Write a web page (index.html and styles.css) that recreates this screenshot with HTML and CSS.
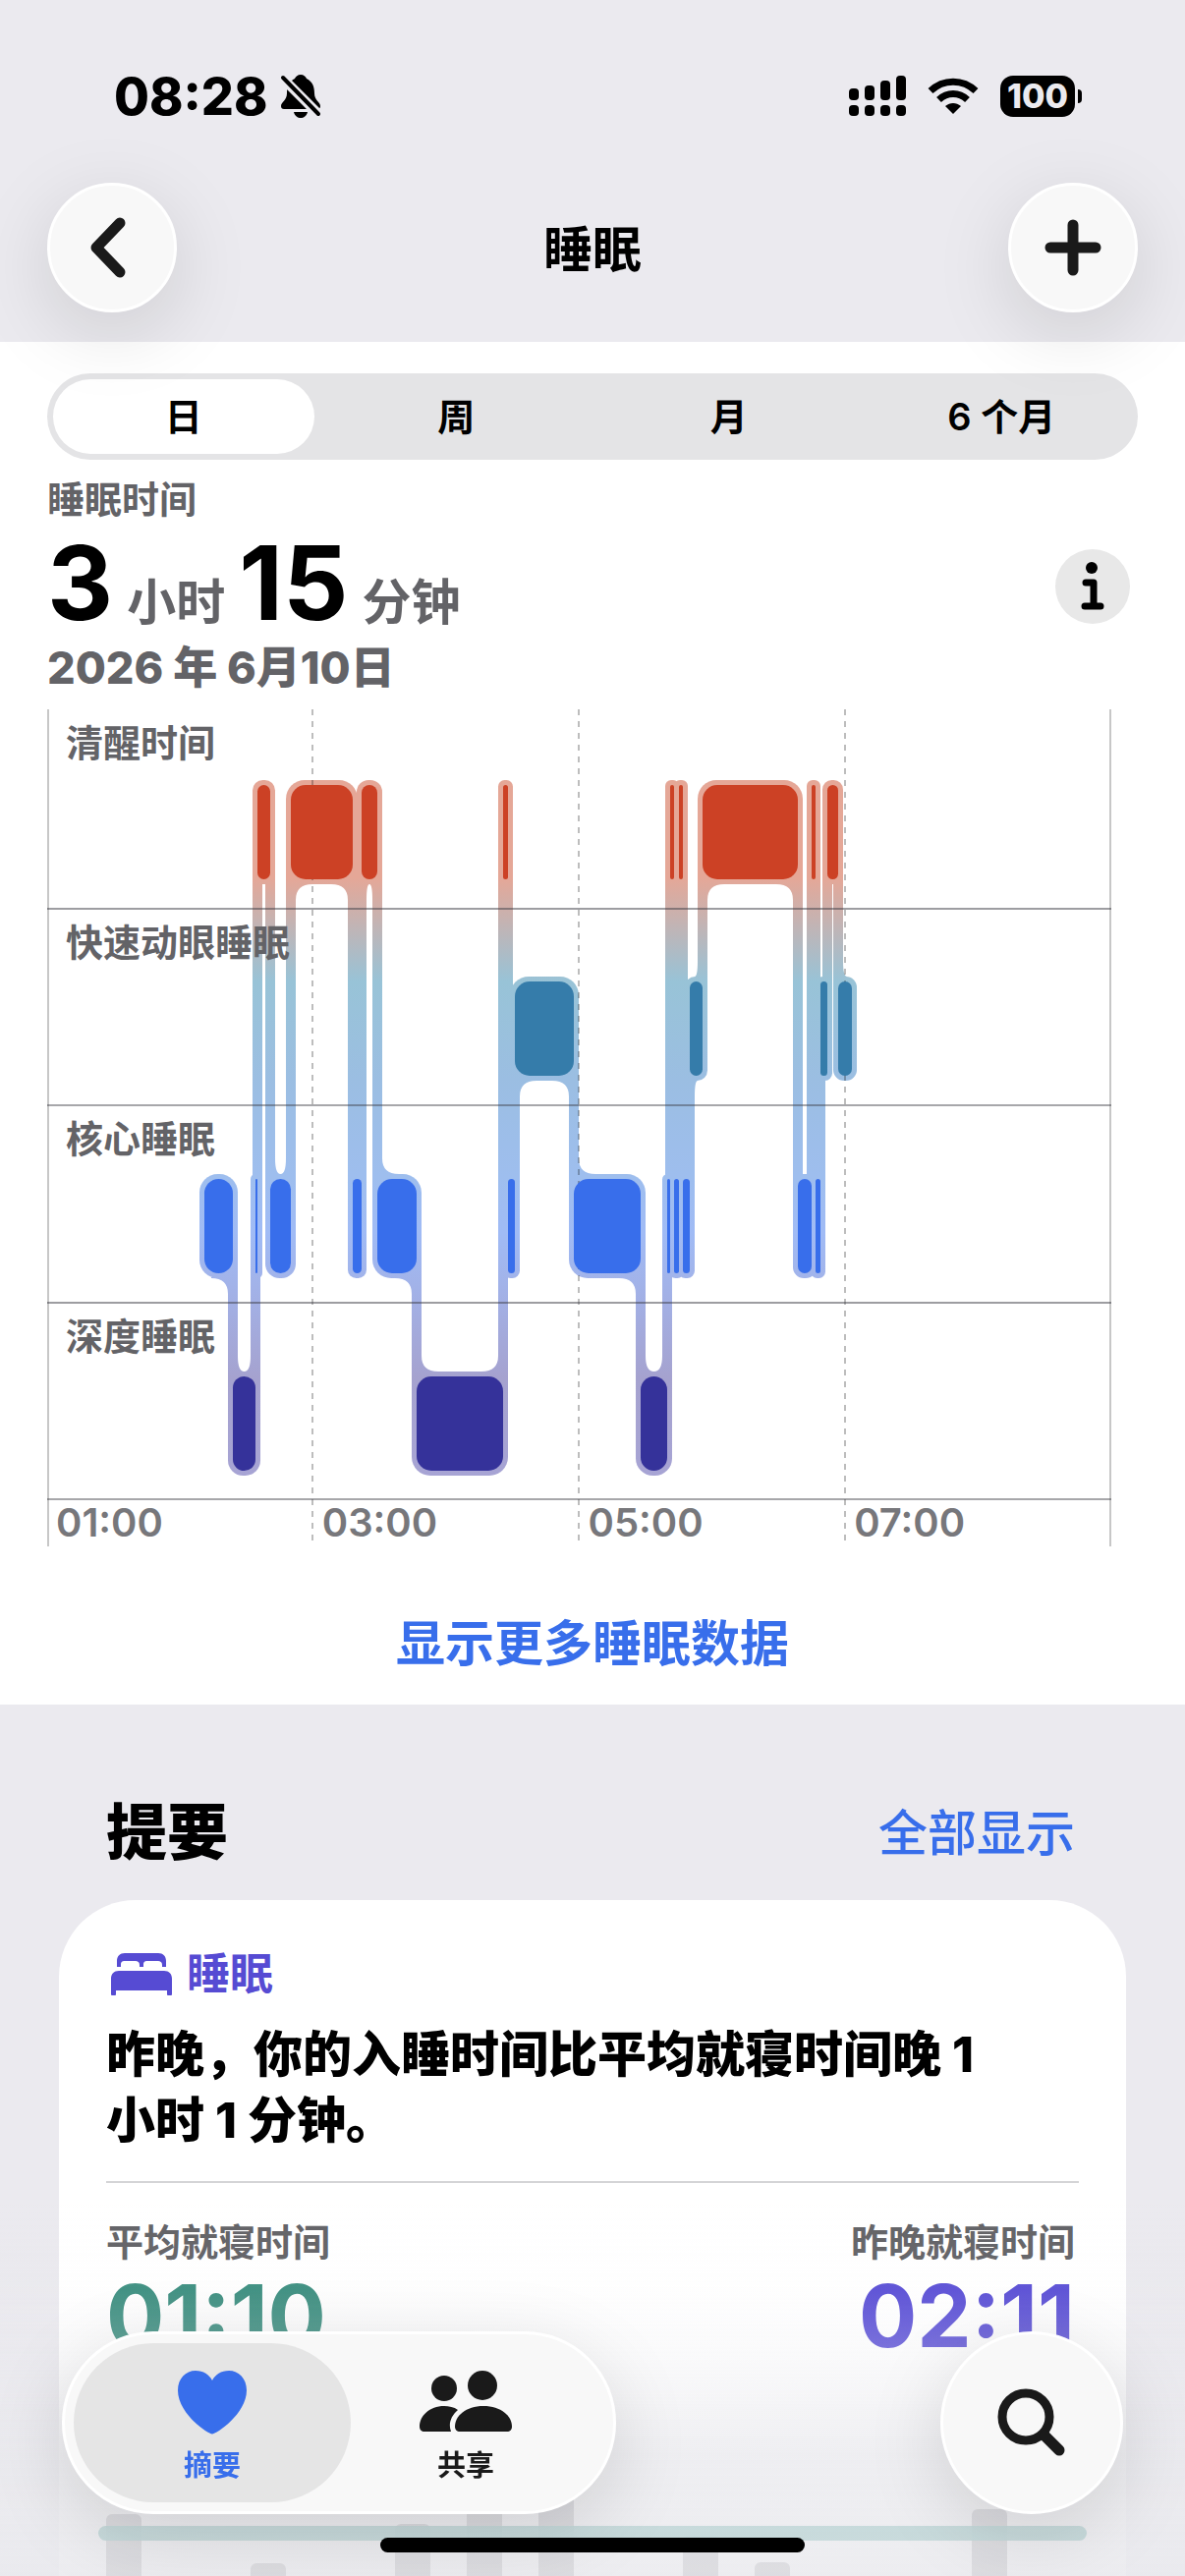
FILE: index.html
```html
<!DOCTYPE html>
<html lang="zh-CN">
<head>
    <meta charset="UTF-8">
    <meta name="viewport" content="width=device-width, initial-scale=1.0">
    <title>睡眠</title>
    <link rel="stylesheet" href="styles.css">
</head>
<body>
    <header class="header">
      <div class="status">
        <div class="status-left">
          <span class="clock">08:28</span>
          <svg width="42" height="46" viewBox="0 0 42 46">
            <path d="M21 1c3 0 5 2 6 4 6 3 8 8 8 15 0 7 6 9 6 13 0 2-1 3-3 3H4c-2 0-3-1-3-3 0-4 6-6 6-13 0-7 2-12 8-15 1-2 3-4 6-4z"/>
            <path d="M14 39h14c-1 4-4 6-7 6s-6-2-7-6z"/>
            <path d="M2 4 40 42" stroke="#ebeaef" stroke-width="10"/>
            <path d="M3 4 39 41" stroke="#000" stroke-width="4" stroke-linecap="round"/>
          </svg>
        </div>
        <div class="status-right">
          <svg width="58" height="42" viewBox="0 0 58 42">
            <rect x="0" y="13" width="10" height="12" rx="4"/>
            <rect x="16" y="10" width="10" height="15" rx="4"/>
            <rect x="32" y="5" width="10" height="20" rx="4"/>
            <rect x="48" y="0" width="10" height="25" rx="4"/>
            <rect x="0" y="30" width="10" height="11" rx="4"/>
            <rect x="16" y="30" width="10" height="11" rx="4"/>
            <rect x="32" y="30" width="10" height="11" rx="4"/>
            <rect x="48" y="30" width="10" height="11" rx="4"/>
          </svg>
          <svg width="52" height="38" viewBox="0 0 52 38">
            <path d="M26 37 18 29c5-4 11-4 16 0z"/>
            <path d="M11.500 22.500c8.500-8 20.500-8 29 0" fill="none" stroke="#000" stroke-width="7"/>
            <path d="M3 13.500c13-12.500 33-12.500 46 0" fill="none" stroke="#000" stroke-width="7"/>
          </svg>
          <div class="battery">100</div>
        </div>
      </div>
      <div class="nav">
        <button class="round-btn" aria-label="返回">
          <svg width="50" height="64" viewBox="0 0 50 64"><path d="M33 7 9 32l24 25" fill="none" stroke="#1a1a1a" stroke-width="11" stroke-linecap="round" stroke-linejoin="round"/></svg>
        </button>
        <h1>睡眠</h1>
        <button class="round-btn" aria-label="添加">
          <svg width="58" height="58" viewBox="0 0 58 58"><path d="M29 6v46M6 29h46" fill="none" stroke="#1a1a1a" stroke-width="11" stroke-linecap="round"/></svg>
        </button>
      </div>
    </header>

    <main>
      <section class="sleep">
        <div class="tabs">
          <button class="tab active">日</button>
          <button class="tab">周</button>
          <button class="tab">月</button>
          <button class="tab">6 个月</button>
        </div>
        <div class="caption">睡眠时间</div>
        <div class="total">
          <div class="value"><b>3</b><span>小时</span><b>15</b><span>分钟</span></div>
          <button class="info-btn" aria-label="信息">
            <svg width="24" height="52" viewBox="0 0 24 52"><circle cx="11" cy="7" r="6"/><path d="M5 22h8v24M4 46h16" fill="none" stroke="#000" stroke-width="7" stroke-linecap="round" stroke-linejoin="round"/></svg>
          </button>
        </div>
        <div class="date">2026 年 6月10日</div>

        <div class="chart">
          <svg id="plot" viewBox="0 0 1083 852">
            <defs>
              <linearGradient id="stage" gradientUnits="userSpaceOnUse" x1="0" y1="72" x2="0" y2="780">
                <stop offset="0" stop-color="#e5a797"/>
                <stop offset="0.14" stop-color="#e5a797"/>
                <stop offset="0.29" stop-color="#98c3d7"/>
                <stop offset="0.33" stop-color="#99c2da"/>
                <stop offset="0.43" stop-color="#9bbee2"/>
                <stop offset="0.57" stop-color="#9ebeee"/>
                <stop offset="0.65" stop-color="#a0bbf5"/>
                <stop offset="0.73" stop-color="#a2b2e8"/>
                <stop offset="0.86" stop-color="#a5a2cf"/>
                <stop offset="1" stop-color="#a7a4d4"/>
              </linearGradient>
            </defs>
            <g id="links" fill="url(#stage)"></g>
            <g stroke="#000" stroke-opacity="0.26" stroke-width="2" stroke-dasharray="6 6">
              <path d="M270 0v852M541 0v852M812 0v852"/>
            </g>
            <g id="bars"></g>
            <path d="M1 0v852M1082 0v852" stroke="#000" stroke-opacity="0.22" stroke-width="2"/>
            <path d="M0 203h1083M0 604h1083" stroke="#3c3c43" stroke-opacity="0.5" stroke-width="2"/>
            <path d="M0 403h1083M0 804h1083" stroke="#3c3c43" stroke-opacity="0.45" stroke-width="2"/>
          </svg>
          <div class="labels">
            <span>清醒时间</span>
            <span>快速动眼睡眠</span>
            <span>核心睡眠</span>
            <span>深度睡眠</span>
            <div class="hours"><span>01:00</span><span>03:00</span><span>05:00</span><span>07:00</span></div>
          </div>
        </div>
        <a class="more" href="#">显示更多睡眠数据</a>
      </section>

      <section class="summary">
        <div class="summary-head">
          <h2>提要</h2>
          <a href="#">全部显示</a>
        </div>
        <article class="card">
          <div class="category">
            <svg width="64" height="44" viewBox="0 0 64 44">
              <path d="M7 15V9c0-5 3-8 8-8h34c5 0 8 3 8 8v6h-4v-2c0-3-2-4-4-4H38c-3 0-4 1-4 4v2h-4v-2c0-3-2-4-4-4H15c-3 0-4 1-4 4v2z"/>
              <path d="M1 43V27c0-5 3-8 8-8h46c5 0 8 3 8 8v16c0 2-5 2-5 0v-4H6v4c0 2-5 2-5 0z"/>
            </svg>
            <span>睡眠</span>
          </div>
          <p>昨晚，你的入睡时间比平均就寝时间晚 1<br>小时 1 分钟。</p>
          <div class="compare">
            <div>
              <div class="caption">平均就寝时间</div>
              <div class="time average">01:10</div>
            </div>
            <div>
              <div class="caption">昨晚就寝时间</div>
              <div class="time last">02:11</div>
            </div>
          </div>
          <div class="history">
            <i style="height: 101px"></i>
            <i style="height: 30px"></i>
            <i style="height: 51px"></i>
            <i style="height: 30px"></i>
            <i style="height: 91px"></i>
            <i style="height: 150px"></i>
            <i style="height: 150px"></i>
            <i style="height: 30px"></i>
            <i style="height: 79px"></i>
            <i style="height: 52px"></i>
            <i style="height: 30px"></i>
            <i style="height: 30px"></i>
            <i style="height: 106px"></i>
            <i style="height: 30px"></i>
            <div class="goal"></div>
          </div>
        </article>
      </section>
    </main>

    <div class="fade"></div>
    <footer class="bottom">
      <nav class="tabbar">
        <button class="tabbar-item active">
          <svg width="72" height="66" viewBox="0 0 72 66"><path d="M36 65.500C32 65.500 1 45 1 21 1 9 9 1 19 1c8 0 14 4 17 10C39 5 45 1 53 1c10 0 18 8 18 20 0 24-31 44.500-35 44.500z"/></svg>
          <span>摘要</span>
        </button>
        <button class="tabbar-item">
          <svg width="94" height="66" viewBox="0 0 94 66">
            <circle cx="25" cy="19" r="13"/>
            <circle cx="64" cy="16" r="15"/>
            <path d="M5 63c-3 0-5-2-5-5 0-11 10-21 25-21 5 0 10 1 14 4-7 6-10 14-7 22z"/>
            <path d="M41 63c-3 0-5-2-5-5 0-11 11-21 29-21s29 10 29 21c0 3-2 5-5 5z"/>
          </svg>
          <span>共享</span>
        </button>
      </nav>
      <button class="search-btn" aria-label="搜索">
        <svg width="70" height="70" viewBox="0 0 70 70"><circle cx="29" cy="29" r="24" fill="none" stroke="#1a1a1a" stroke-width="9"/><path d="m48 48 15 15" stroke="#1a1a1a" stroke-width="11" stroke-linecap="round"/></svg>
      </button>
    </footer>
    <div class="home"></div>

    <script>
      // stage, start x, end x
      const segments = [
        ["core", 160, 189], ["deep", 189, 212], ["core", 212, 214], ["awake", 214, 227],
        ["core", 227, 248], ["awake", 248, 311], ["core", 311, 320], ["awake", 320, 336],
        ["core", 336, 376], ["deep", 376, 464], ["awake", 464, 469], ["core", 469, 476],
        ["rem", 476, 536], ["core", 536, 604], ["deep", 604, 631], ["core", 631, 634],
        ["awake", 634, 638], ["core", 638, 643], ["awake", 643, 647], ["core", 647, 654],
        ["rem", 654, 667], ["awake", 667, 764], ["core", 764, 778], ["awake", 778, 782],
        ["core", 782, 787], ["rem", 787, 794], ["awake", 794, 805], ["rem", 805, 819]
      ];
      const stages = {
        awake: { y: 77, color: "#cc4125" },
        rem: { y: 277, color: "#357caa" },
        core: { y: 478, color: "#386eeb" },
        deep: { y: 679, color: "#35329a" }
      };
      const H = 96;
      const PAD = 5;

      function rect(x, y, w, h, r, fill) {
        return `<rect x="${x}" y="${y}" width="${w}" height="${h}" rx="${r}"${fill ? ` fill="${fill}"` : ""}/>`;
      }

      // curve between a connector and the bar it leaves; dx and dy point away from the corner
      function fillet(x, y, dx, dy) {
        return `<path d="M${x} ${y - Math.sign(dy)}h${dx}v${Math.sign(dy)}q${-dx} 0 ${-dx} ${dy}h${-Math.sign(dx)}V${y - Math.sign(dy)}z"/>`;
      }

      let links = "";
      let bars = "";
      for (let i = 0; i < segments.length; i++) {
        const [name, x1, x2] = segments[i];
        const y = stages[name].y;
        const w = x2 - x1;
        links += rect(x1 - PAD, y - PAD, w + PAD * 2, H + PAD * 2, Math.min(19, w / 2 + 4));
        bars += rect(x1, y, w, H, Math.min(15, w / 2), stages[name].color);

        const prev = segments[i - 1];
        const next = segments[i + 1];
        const left = prev ? Math.sign(stages[prev[0]].y - y) : 0;
        const right = next ? Math.sign(stages[next[0]].y - y) : 0;

        // square off the corners where a connector joins
        const c = Math.min(19, w / 2 + PAD);
        const corner = d => d > 0 ? y + H + PAD - c : y - PAD;
        if (left) links += rect(x1 - PAD, corner(left), c, c, 0);
        if (right) links += rect(x2 + PAD - c, corner(right), c, c, 0);

        const room = left == right ? (w - PAD * 2) / 2 : w - PAD * 2;
        const r = Math.min(17, room);
        if (r > 2) {
          const edge = d => d > 0 ? y + H + PAD : y - PAD;
          if (left) links += fillet(x1 + PAD, edge(left), r, left * 16);
          if (right) links += fillet(x2 - PAD, edge(right), -r, right * 16);
        }
        if (next) {
          const y2 = stages[next[0]].y;
          links += rect(x2 - PAD, Math.min(y, y2) + H / 2, PAD * 2, Math.abs(y2 - y), 0);
        }
      }
      document.getElementById("links").innerHTML = links;
      document.getElementById("bars").innerHTML = bars;
    </script>
</body>
</html>
```
FILE: styles.css
```css
* {
  box-sizing: border-box;
}
html {
  height: 100%;
}
body {
  margin: 0;
  height: 100%;
  overflow: hidden;
  background-color: #ebeaef;
  color: #000;
  font-family: Inter, "Noto Sans CJK SC", sans-serif;
}
button {
  border: none;
  padding: 0;
  background: none;
  color: inherit;
  font-family: inherit;
}
a {
  color: #386eeb;
  text-decoration: none;
}
svg {
  display: block;
}

/* header */
.header {
  position: relative;
  z-index: 1;
  padding: 62px 48px 30px;
}
.status {
  display: flex;
  justify-content: space-between;
  height: 72px;
  padding: 0 58px 0 68px;
}
.status-left,
.status-right {
  display: flex;
  align-items: center;
  gap: 12px;
}
.status-right {
  gap: 22px;
}
.clock {
  font-size: 52px;
  font-weight: 800;
}
.battery {
  position: relative;
  width: 76px;
  height: 42px;
  margin-right: 6px;
  border-radius: 13px;
  background-color: #000;
  color: #ebeaef;
  font-size: 34px;
  font-weight: 800;
  line-height: 42px;
  text-align: center;
}
.battery::after {
  content: "";
  position: absolute;
  top: 14px;
  right: -7px;
  width: 4px;
  height: 14px;
  border-radius: 0 4px 4px 0;
  background-color: #000;
}
.nav {
  display: flex;
  justify-content: space-between;
  align-items: center;
  margin-top: 52px;
}
.nav h1 {
  margin: 0;
  padding-bottom: 4px;
  font-size: 50px;
  font-weight: 700;
}
.round-btn,
.search-btn,
.tabbar {
  display: flex;
  align-items: center;
  justify-content: center;
  border: 3px solid #fff;
  background-color: #f8f8f8;
  box-shadow: 0 20px 80px rgba(0, 0, 0, 0.13);
}
.round-btn {
  width: 132px;
  height: 132px;
  border-radius: 50%;
}

/* sleep */
.sleep {
  padding: 32px 48px;
  background-color: #fff;
}
.tabs {
  display: grid;
  grid-template-columns: repeat(4, 1fr);
  height: 88px;
  margin-bottom: 16px;
  border-radius: 44px;
  background-color: #e4e4e6;
}
.tab {
  margin: 6px;
  padding-bottom: 5px;
  border-radius: 38px;
  font-size: 38px;
  font-weight: 600;
}
.tab.active {
  background-color: #fff;
}
.caption {
  color: #636367;
  font-size: 38px;
  font-weight: 700;
  line-height: 48px;
}
.total {
  display: flex;
  justify-content: space-between;
  align-items: center;
  height: 120px;
  padding: 10px 8px 0 0;
}
.value {
  display: flex;
  align-items: baseline;
  gap: 14px;
  padding-top: 12px;
  line-height: 120px;
}
.value b {
  font-size: 104px;
  font-weight: 700;
}
.value span {
  color: #636367;
  font-size: 50px;
  font-weight: 700;
}
.info-btn {
  display: flex;
  align-items: center;
  justify-content: center;
  width: 76px;
  height: 76px;
  border-radius: 50%;
  background-color: #e8e8e8;
}
.date {
  color: #636367;
  font-size: 45px;
  font-weight: 800;
  line-height: 56px;
}
.chart {
  display: grid;
  margin: 14px 27px 0 0;
}
.chart svg,
.labels {
  grid-area: 1 / 1;
  width: 100%;
}
.labels {
  display: grid;
  grid-template-rows: 203fr 200fr 201fr 200fr 48fr;
  color: #636367;
  font-size: 38px;
  font-weight: 600;
}
.labels > span {
  padding: 10px 0 0 19px;
  line-height: 48px;
}
.hours {
  display: grid;
  grid-template-columns: repeat(4, 1fr);
  color: #77777b;
  font-size: 40px;
  line-height: 48px;
}
.hours span {
  padding-left: 9px;
}
.more {
  display: block;
  margin: 69px 0 0;
  font-size: 50px;
  font-weight: 600;
  line-height: 60px;
  text-align: center;
}

/* summary */
.summary-head {
  display: flex;
  justify-content: space-between;
  align-items: center;
  padding: 95px 112px 32px 108px;
  line-height: 72px;
}
.summary-head h2 {
  margin: 0;
  font-size: 62px;
  font-weight: 800;
}
.summary-head a {
  font-size: 50px;
  font-weight: 500;
}
.card {
  margin: 0 60px;
  padding: 50px 48px;
  border-radius: 78px;
  background-color: #fff;
}
.category {
  display: flex;
  align-items: center;
  gap: 14px;
  padding-left: 4px;
  color: #564bd3;
  fill: #564bd3;
  font-size: 44px;
  font-weight: 700;
  line-height: 50px;
}
.card p {
  margin: 24px 0 28px;
  font-size: 50px;
  font-weight: 800;
  line-height: 67px;
}
.compare {
  display: flex;
  justify-content: space-between;
  padding: 36px 4px 0 0;
  border-top: 2px solid #d4d4d6;
}
.time {
  font-size: 88px;
  font-weight: 700;
  line-height: 102px;
}
.average {
  color: #3c8f80;
}
.last {
  color: #5a4fd6;
  text-align: right;
}
.history {
  position: relative;
  display: flex;
  justify-content: space-between;
  align-items: flex-end;
  height: 240px;
  margin-top: 12px;
}
.history i {
  width: 36px;
  border-radius: 6px 6px 0 0;
  background-color: #909094;
}
.goal {
  position: absolute;
  top: 151px;
  left: -8px;
  right: -8px;
  height: 15px;
  border-radius: 8px;
  background-color: #008070;
  opacity: 0.9;
}

/* bottom bar */
.fade {
  position: fixed;
  left: 0;
  right: 0;
  bottom: 0;
  height: 382px;
  background: linear-gradient(rgba(234, 234, 238, 0), rgba(234, 234, 238, 0.05) 24%, rgba(234, 234, 238, 0.25) 42%, rgba(234, 234, 238, 0.5) 55%, rgba(234, 234, 238, 0.8) 68%, rgba(234, 234, 238, 0.86));
}
.bottom {
  position: fixed;
  left: 0;
  right: 0;
  bottom: 63px;
  display: flex;
  justify-content: space-between;
  padding: 0 63px;
}
.tabbar {
  height: 186px;
  padding: 9px;
  border-radius: 93px;
}
.tabbar-item {
  display: flex;
  flex-direction: column;
  align-items: center;
  gap: 12px;
  width: 282px;
  height: 162px;
  padding-top: 27px;
  border-radius: 81px;
  color: #1a1a1a;
  fill: #1a1a1a;
  font-size: 29px;
  font-weight: 600;
  line-height: 40px;
}
.tabbar-item + .tabbar-item {
  margin-left: -24px;
}
.tabbar-item.active {
  background-color: #e5e5e5;
  color: #386eeb;
  fill: #386eeb;
}
.search-btn {
  width: 186px;
  height: 186px;
  border-radius: 50%;
}
.home {
  position: fixed;
  left: 0;
  right: 0;
  bottom: 24px;
  width: 432px;
  height: 15px;
  margin: 0 auto;
  border-radius: 8px;
  background-color: #000;
}
```
